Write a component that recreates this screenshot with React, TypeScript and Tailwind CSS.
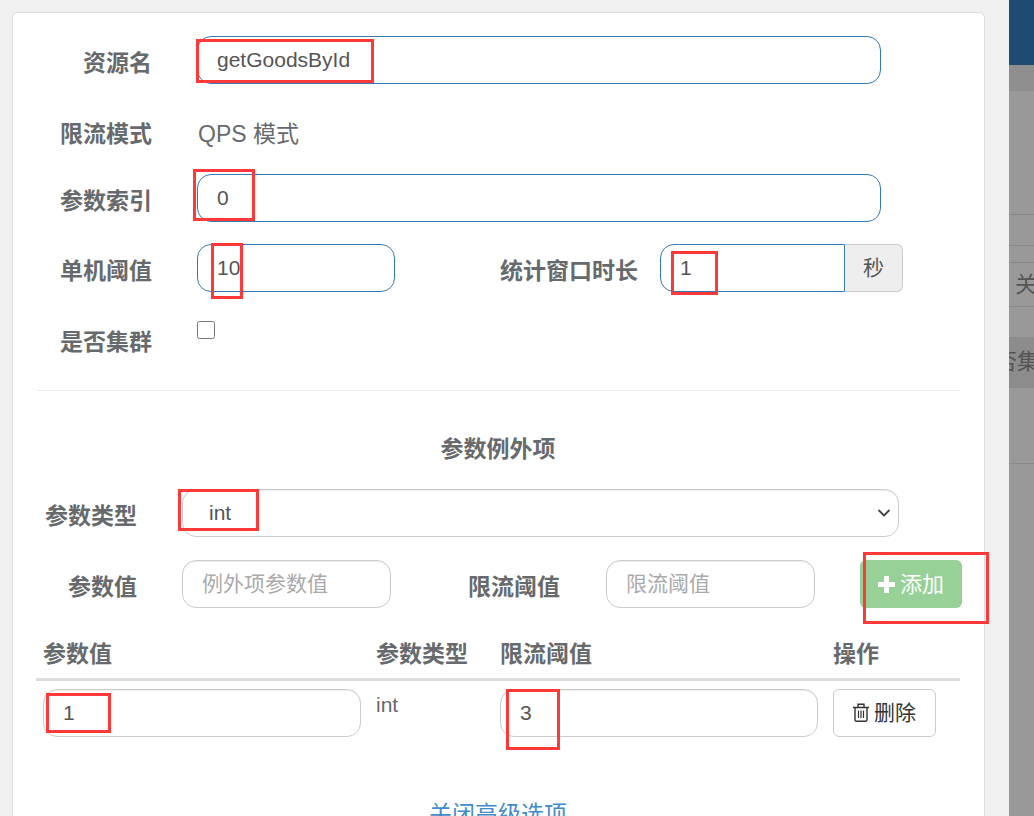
import { ReactNode } from 'react';
import { ChevronDown } from 'lucide-react';

const FONT = "font-['Liberation_Sans','Noto_Sans_CJK_SC',sans-serif]";

const inputBase =
  'h-12 rounded-[14px] border bg-white px-[19px] text-[21px] text-[#555] outline-none placeholder:text-[#aaa]';
const inputBlue = `${inputBase} border-[#337ab7]`;
const inputGray = `${inputBase} border-[#ccc] shadow-[inset_0_1px_1px_rgba(0,0,0,0.075)]`;

function Label({ className, children }: { className: string; children: ReactNode }) {
  return (
    <label className={`flex h-12 shrink-0 items-center justify-end pt-[6px] text-[23px] font-bold text-[#676a6c] ${className}`}>
      {children}
    </label>
  );
}

function PlusIcon() {
  return (
    <svg width="17" height="17" viewBox="0 0 17 17" fill="white">
      <path d="M6 0h5v6h6v5h-6v6H6v-6H0V6h6z" />
    </svg>
  );
}

function TrashIcon() {
  return (
    <svg width="16" height="19" viewBox="0 0 16 19" fill="none" stroke="#333" strokeWidth="1.4">
      <path d="M0 4.5h16M5 4.5V1.2h6v3.3M2 4.5v12.2c0 .9.6 1.5 1.5 1.5h9c.9 0 1.5-.6 1.5-1.5V4.5" />
      <path d="M5.5 7.5v7.5M8 7.5v7.5M10.5 7.5v7.5" strokeWidth="1.2" />
    </svg>
  );
}

function BackdropPanel() {
  return (
    <div className="flex h-full w-[25px] shrink-0 flex-col overflow-hidden bg-[#999] text-[22px] text-[#555]">
      <div className="h-[65px] shrink-0 bg-[#1f4a72]" />
      <div className="h-[26px] shrink-0 bg-[#8f8f8f]" />
      <div className="h-[124px] shrink-0 border-b border-[#888]" />
      <div className="h-[31px] shrink-0 border-b border-[#888]" />
      <div className="h-[17px] shrink-0 border-b border-[#888]" />
      <div className="flex h-[44px] shrink-0 items-center whitespace-nowrap border-b border-[#888] pl-[6px]">关</div>
      <div className="h-[30px] shrink-0" />
      <div className="flex h-[51px] shrink-0 items-center whitespace-nowrap bg-[#8c8c8c] pb-[2px]">
        <span className="-ml-[14px]">否集</span>
      </div>
      <div className="h-[76px] shrink-0 border-b border-[#888]" />
    </div>
  );
}

function Annotations() {
  const boxes = [
    'left-[196px] top-[39px] h-[44px] w-[178px]',
    'left-[193px] top-[169px] h-[52px] w-[62px]',
    'left-[211px] top-[243px] h-[56px] w-[32px]',
    'left-[671px] top-[251px] h-[44px] w-[47px]',
    'left-[178px] top-[489px] h-[42px] w-[81px]',
    'left-[863px] top-[552px] h-[72px] w-[126px]',
    'left-[46px] top-[693px] h-[40px] w-[65px]',
    'left-[506px] top-[689px] h-[61px] w-[54px]',
  ];
  return (
    <>
      {boxes.map((box) => (
        <div key={box} className={`pointer-events-none absolute border-[3px] border-[#ff3838] ${box}`} />
      ))}
    </>
  );
}

export default function App() {
  return (
    <div className={`relative flex h-[816px] w-[1034px] overflow-hidden bg-[#f0f0f0] ${FONT}`}>
      <div className="ml-3 mt-3 w-[997px]">
        <div className="h-[900px] w-[973px] rounded-t-[6px] border border-[#ddd] bg-white px-[23px] pt-[23px]">
          <div className="flex">
            <Label className="w-[116px]">资源名</Label>
            <input className={`ml-[45px] w-[684px] ${inputBlue}`} defaultValue="getGoodsById" />
          </div>

          <div className="mt-[26px] flex h-12 items-center">
            <div className="w-[116px] text-right text-[23px] font-bold text-[#676a6c]">限流模式</div>
            <div className="ml-[46px] text-[23px] text-[#676a6c]">QPS 模式</div>
          </div>

          <div className="mt-4 flex">
            <Label className="w-[116px]">参数索引</Label>
            <input className={`ml-[45px] w-[684px] ${inputBlue}`} defaultValue="0" />
          </div>

          <div className="mt-[22px] flex">
            <Label className="w-[116px]">单机阈值</Label>
            <input className={`ml-[45px] w-[198px] ${inputBlue}`} defaultValue="10" />
            <Label className="w-[243px]">统计窗口时长</Label>
            <div className="ml-[22px] flex">
              <input className={`w-[185px] rounded-r-none ${inputBlue}`} defaultValue="1" />
              <span className="flex h-12 w-[58px] items-center justify-center rounded-r-[6px] border border-l-0 border-[#ccc] bg-[#eee] text-[21px] text-[#555]">
                秒
              </span>
            </div>
          </div>

          <div className="mt-[23px] flex">
            <Label className="w-[116px]">是否集群</Label>
            <input type="checkbox" className="ml-[45px] mt-[6px] h-[18px] w-[18px]" />
          </div>

          <div className="mt-[27px] h-px w-[924px] bg-[#eee]" />

          <div className="mt-[43px] h-[30px] w-[924px] text-center text-[23px] font-bold leading-[30px] text-[#676a6c]">
            参数例外项
          </div>

          <div className="mt-[25px] flex">
            <Label className="w-[101px]">参数类型</Label>
            <div className="relative ml-[45px]">
              <select className="h-12 w-[717px] appearance-none rounded-[14px] border border-[#ccc] bg-white pl-[26px] pr-2 text-[21px] text-[#555] outline-none shadow-[inset_0_1px_1px_rgba(0,0,0,0.075)]">
                <option>int</option>
              </select>
              <ChevronDown className="pointer-events-none absolute right-[5px] top-[14px] h-[20px] w-[20px] text-[#444]" strokeWidth={2.2} />
            </div>
          </div>

          <div className="mt-[23px] flex">
            <Label className="w-[101px]">参数值</Label>
            <input className={`ml-[45px] w-[209px] ${inputGray}`} placeholder="例外项参数值" />
            <Label className="w-[169px]">限流阈值</Label>
            <input className={`ml-[46px] w-[209px] ${inputGray}`} placeholder="限流阈值" />
            <button className="ml-[45px] flex h-12 w-[102px] shrink-0 items-center justify-center gap-[5px] rounded-[6px] bg-[#97d197] text-[22px] text-white">
              <PlusIcon />
              添加
            </button>
          </div>

          <table className="w-[924px] table-fixed">
            <thead>
              <tr className="border-b-[3px] border-[#ddd] text-left text-[23px] font-bold text-[#676a6c]">
                <th className="h-[71px] w-[333px] px-[7px] pt-[22px]">参数值</th>
                <th className="w-[124px] px-[7px] pt-[22px]">参数类型</th>
                <th className="w-[333px] px-[7px] pt-[22px]">限流阈值</th>
                <th className="px-[7px] pt-[22px]">操作</th>
              </tr>
            </thead>
            <tbody>
              <tr className="align-top text-[21px] text-[#676a6c]">
                <td className="px-[7px] pt-2">
                  <input className={`w-[318px] ${inputGray}`} defaultValue="1" />
                </td>
                <td className="px-[7px] pt-2">int</td>
                <td className="px-[7px] pt-2">
                  <input className={`w-[318px] ${inputGray}`} defaultValue="3" />
                </td>
                <td className="px-[7px] pt-2">
                  <button className="flex h-12 w-[103px] items-center justify-center gap-[5px] rounded-[6px] border border-[#ccc] bg-white text-[21px] text-[#333]">
                    <TrashIcon />
                    删除
                  </button>
                </td>
              </tr>
            </tbody>
          </table>

          <div className="mt-[62px] w-[924px] text-center text-[23px] leading-[30px] text-[#428bca]">关闭高级选项</div>
        </div>
      </div>
      <BackdropPanel />
      <Annotations />
    </div>
  );
}
